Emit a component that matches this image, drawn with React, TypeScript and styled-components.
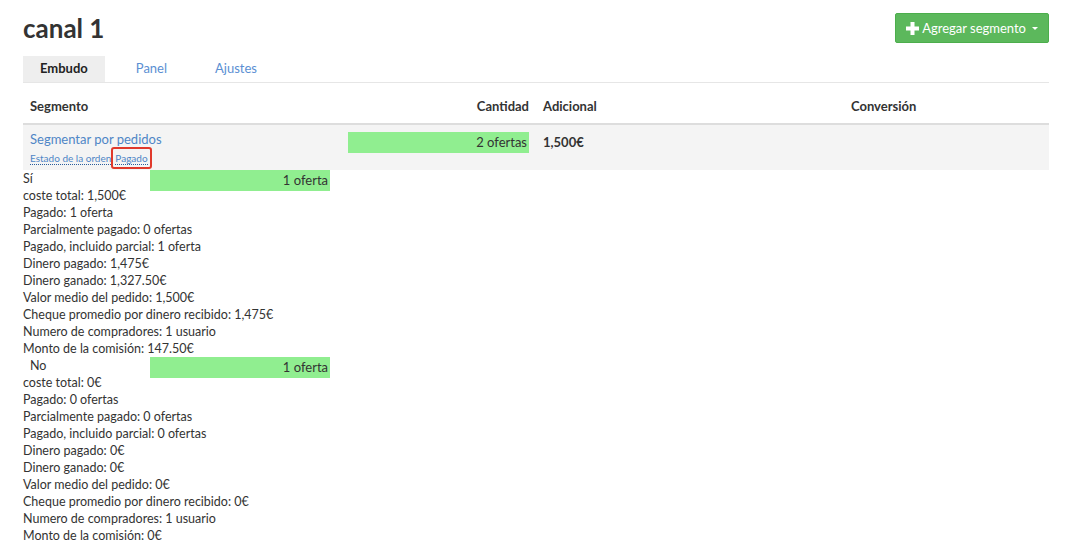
import React from "react";
import styled, { createGlobalStyle } from "styled-components";

const Global = createGlobalStyle`
  html, body { margin: 0; padding: 0; background: #fff; }
  body { font-family: Lato, "Open Sans", Arial, sans-serif; color: #333; font-size: 13px; }
  * { box-sizing: border-box; }
`;

const Page = styled.div`
  width: 1075px;
  padding: 0 26px 0 23px;
`;

const TopBar = styled.div`
  display: flex;
  justify-content: space-between;
  align-items: flex-start;
  padding-top: 13px;
  height: 56px;
`;

const Title = styled.h1`
  margin: 0;
  font-size: 26px;
  font-weight: 700;
  line-height: 30px;
  color: #333;
`;

const AddButton = styled.button`
  display: flex;
  align-items: center;
  gap: 3px;
  height: 30px;
  padding: 0 10px 0 10px;
  background: #5cb85c;
  border: 1px solid #4cae4c;
  border-radius: 2px;
  color: #fff;
  font-family: inherit;
  font-size: 13px;
  cursor: pointer;
`;

const Caret = styled.span`
  display: inline-block;
  margin-left: 3px;
  width: 0;
  height: 0;
  border-left: 3px solid transparent;
  border-right: 3px solid transparent;
  border-top: 3px solid #fff;
`;

const Tabs = styled.div`
  display: flex;
  gap: 14px;
  height: 27px;
  border-bottom: 1px solid #e6e6e6;
`;

const Tab = styled.div<{ $active?: boolean }>`
  display: flex;
  align-items: center;
  padding: 0 17px 3px;
  height: 26px;
  font-size: 13px;
  font-weight: ${(p) => (p.$active ? 700 : 400)};
  color: ${(p) => (p.$active ? "#222" : "#5b8fd3")};
  background: ${(p) => (p.$active ? "#eee" : "transparent")};
`;

const Table = styled.div`
  margin-top: 7px;
`;

const Grid = styled.div`
  display: grid;
  grid-template-columns: 318px 195px 308px 1fr;
`;

const HeadRow = styled(Grid)`
  height: 35px;
  border-bottom: 2px solid #ddd;
`;

const HeadCell = styled.div<{ $right?: boolean }>`
  padding: 8px 7px 0;
  font-weight: 700;
  font-size: 13px;
  text-align: ${(p) => (p.$right ? "right" : "left")};
`;

const BodyRow = styled(Grid)`
  background: #f4f4f4;
  height: 45px;
`;

const Cell = styled.div`
  padding: 7px 7px 0;
`;

const LinkText = styled.div`
  color: #4f86c6;
  font-size: 13px;
  line-height: 15px;
`;

const Crumbs = styled.div`
  display: flex;
  align-items: center;
  font-size: 10px;
  color: #4f86c6;
`;

const Dotted = styled.span`
  border-bottom: 1px dotted #2a5d9a;
  line-height: 12px;
`;

const Marked = styled.span`
  border: 2px solid #e0392b;
  border-radius: 3px;
  padding: 3px 2px 2px;
  display: inline-flex;
`;

const Bar = styled.div<{ $w: number }>`
  width: ${(p) => p.$w}px;
  height: 21px;
  background: #90ee90;
  text-align: right;
  padding-right: 2px;
  font-size: 13px;
  line-height: 21px;
  color: #333;
  flex-shrink: 0;
`;

const Amount = styled.div`
  font-weight: 700;
  font-size: 13px;
  line-height: 21px;
`;

const Detail = styled.div`
  font-size: 12.5px;
  line-height: 17px;
`;

const SubHead = styled.div`
  display: flex;
  align-items: flex-start;
  height: 17px;
`;

const SubLabel = styled.div<{ $indent: number }>`
  width: 127px;
  padding-left: ${(p) => p.$indent}px;
`;

const Line = styled.div``;

const Plus = () => (
  <svg width="13" height="13" viewBox="0 0 13 13">
    <path d="M4.5 0h4v4.5H13v4H8.5V13h-4V8.5H0v-4h4.5z" fill="#fff" />
  </svg>
);

type Group = { label: string; indent: number; lines: string[] };

const groups: Group[] = [
  {
    label: "Sí",
    indent: 0,
    lines: [
      "coste total: 1,500€",
      "Pagado: 1 oferta",
      "Parcialmente pagado: 0 ofertas",
      "Pagado, incluido parcial: 1 oferta",
      "Dinero pagado: 1,475€",
      "Dinero ganado: 1,327.50€",
      "Valor medio del pedido: 1,500€",
      "Cheque promedio por dinero recibido: 1,475€",
      "Numero de compradores: 1 usuario",
      "Monto de la comisión: 147.50€",
    ],
  },
  {
    label: "No",
    indent: 7,
    lines: [
      "coste total: 0€",
      "Pagado: 0 ofertas",
      "Parcialmente pagado: 0 ofertas",
      "Pagado, incluido parcial: 0 ofertas",
      "Dinero pagado: 0€",
      "Dinero ganado: 0€",
      "Valor medio del pedido: 0€",
      "Cheque promedio por dinero recibido: 0€",
      "Numero de compradores: 1 usuario",
      "Monto de la comisión: 0€",
    ],
  },
];

export default function App() {
  return (
    <Page>
      <Global />
      <TopBar>
        <Title>canal 1</Title>
        <AddButton>
          <Plus />
          Agregar segmento
          <Caret />
        </AddButton>
      </TopBar>
      <Tabs>
        <Tab $active>Embudo</Tab>
        <Tab>Panel</Tab>
        <Tab>Ajustes</Tab>
      </Tabs>
      <Table>
        <HeadRow>
          <HeadCell>Segmento</HeadCell>
          <HeadCell $right>Cantidad</HeadCell>
          <HeadCell>Adicional</HeadCell>
          <HeadCell>Conversión</HeadCell>
        </HeadRow>
        <BodyRow>
          <Cell>
            <LinkText>Segmentar por pedidos</LinkText>
            <Crumbs>
              <Dotted>Estado de la orden</Dotted>
              <Marked>
                <Dotted>Pagado</Dotted>
              </Marked>
            </Crumbs>
          </Cell>
          <Cell>
            <Bar $w={181}>2 ofertas</Bar>
          </Cell>
          <Cell>
            <Amount>1,500€</Amount>
          </Cell>
          <Cell />
        </BodyRow>
      </Table>
      <Detail>
        {groups.map((g) => (
          <React.Fragment key={g.label}>
            <SubHead>
              <SubLabel $indent={g.indent}>{g.label}</SubLabel>
              <Bar $w={180}>1 oferta</Bar>
            </SubHead>
            {g.lines.map((l, i) => (
              <Line key={i}>{l}</Line>
            ))}
          </React.Fragment>
        ))}
      </Detail>
    </Page>
  );
}
